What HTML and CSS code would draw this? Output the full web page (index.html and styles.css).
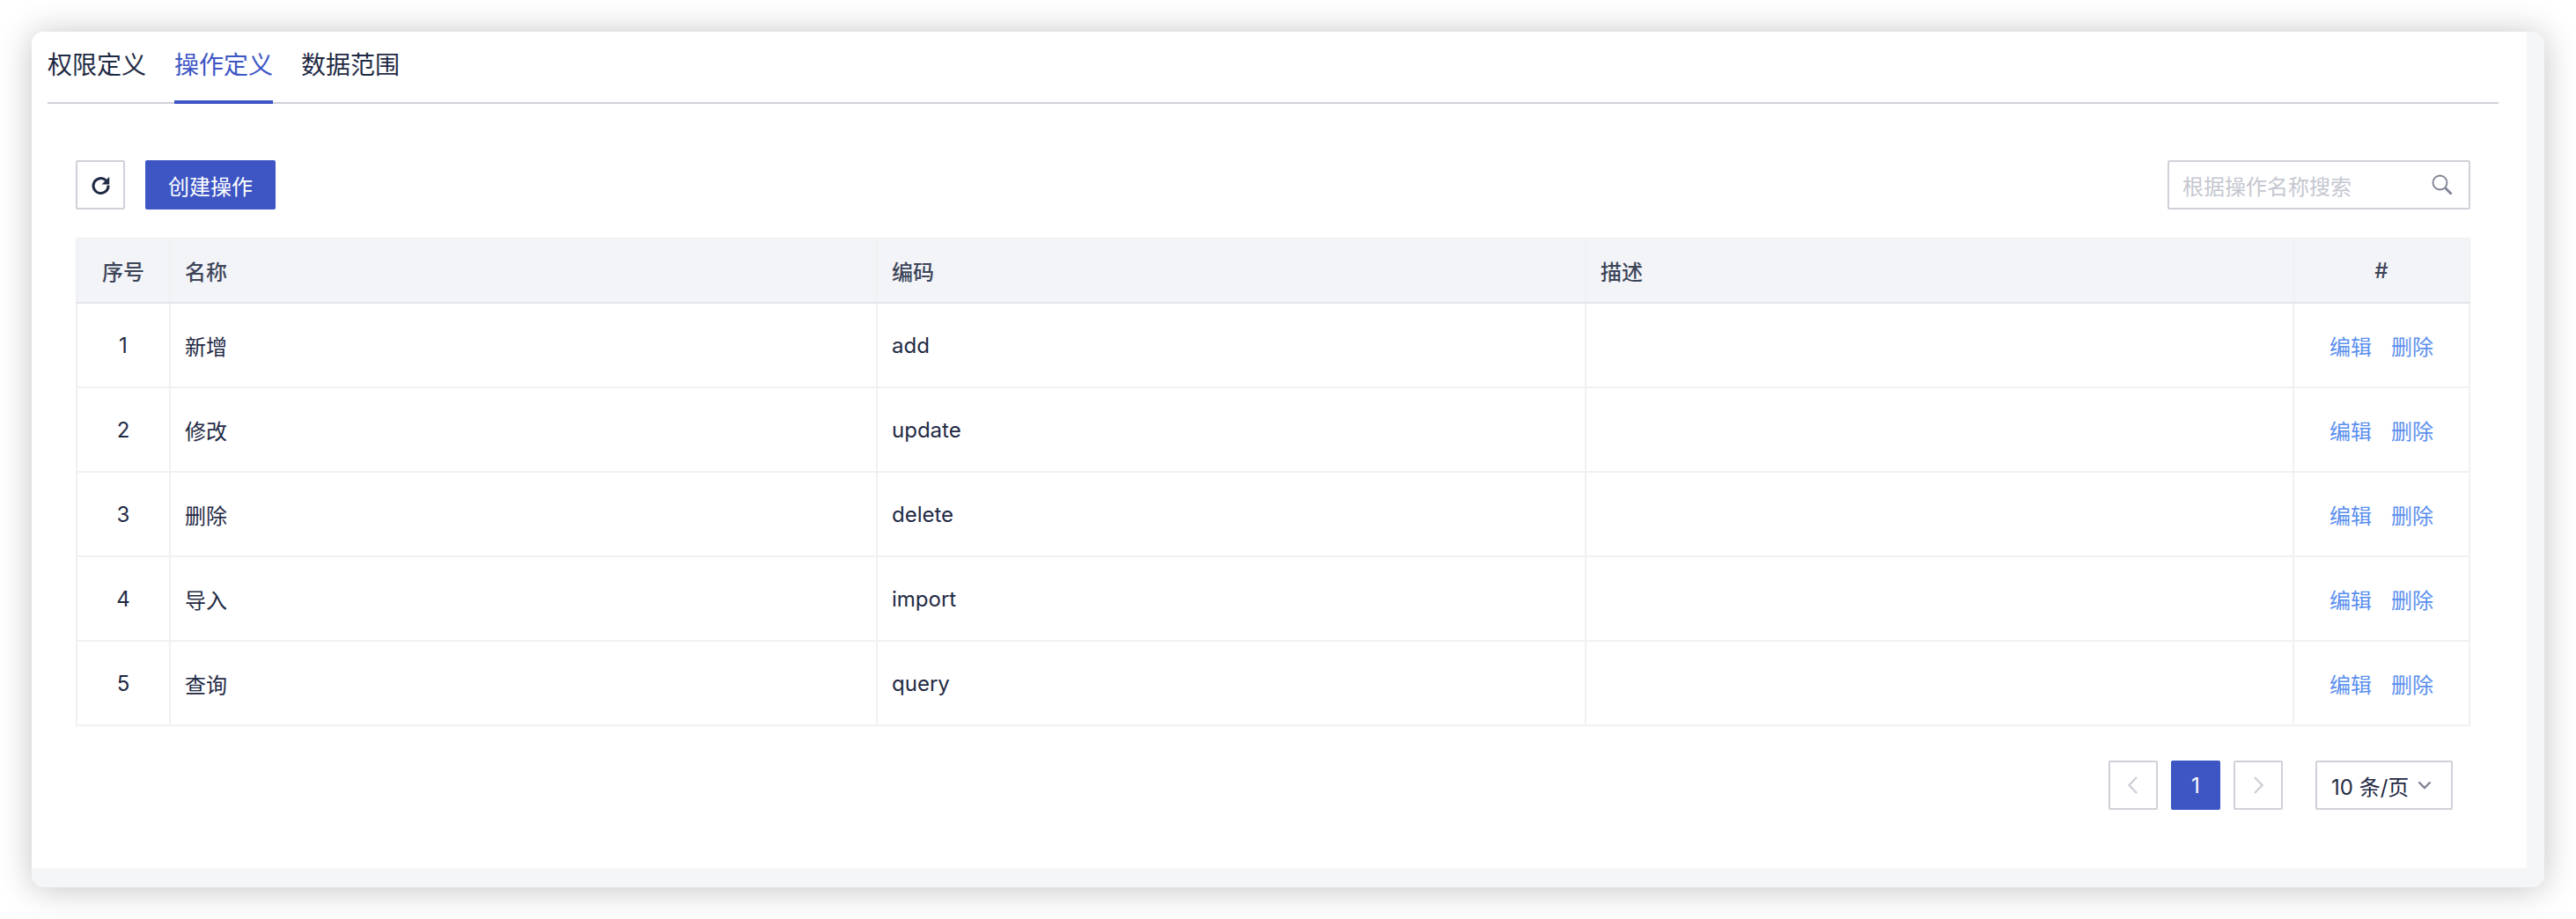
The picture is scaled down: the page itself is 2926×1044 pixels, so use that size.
FILE: index.html
```html
<!DOCTYPE html>
<html lang="zh-CN">
<head>
  <meta charset="UTF-8">
  <title>操作定义</title>
  <link rel="stylesheet" href="styles.css">
</head>
<body>

<div class="card">
  <div class="panel">
    <div class="tabs">
      <a class="tab">权限定义</a>
      <a class="tab active">操作定义</a>
      <a class="tab">数据范围</a>
    </div>

    <div class="content">
      <div class="toolbar">
        <div class="toolbar-left">
          <button class="btn-icon">
            <svg width="24" height="24" viewBox="0 0 24 24" fill="none">
              <path d="M18.300 6.800A8.500 8.500 0 1 0 21 12.500" stroke="#1f2a44" stroke-width="3"/>
              <path d="M22.200 2.700v8.800h-8.600z" fill="#1f2a44"/>
            </svg>
          </button>
          <button class="btn-primary">创建操作</button>
        </div>
        <div class="search">
          <span class="placeholder">根据操作名称搜索</span>
          <svg width="24" height="24" viewBox="0 0 24 24" fill="none" stroke="#7d8294">
            <circle cx="9.500" cy="9.500" r="8" stroke-width="1.800"/>
            <path d="M15.500 15.500l7 7" stroke-width="2.800"/>
          </svg>
        </div>
      </div>

      <table class="grid">
        <colgroup>
          <col class="col-no"><col class="col-name"><col class="col-code"><col class="col-desc"><col>
        </colgroup>
        <thead>
          <tr>
            <th class="center">序号</th>
            <th>名称</th>
            <th>编码</th>
            <th>描述</th>
            <th class="center">#</th>
          </tr>
        </thead>
        <tbody>
          <tr>
            <td class="center">1</td><td>新增</td><td>add</td><td></td>
            <td class="center"><a class="link">编辑</a><a class="link">删除</a></td>
          </tr>
          <tr>
            <td class="center">2</td><td>修改</td><td>update</td><td></td>
            <td class="center"><a class="link">编辑</a><a class="link">删除</a></td>
          </tr>
          <tr>
            <td class="center">3</td><td>删除</td><td>delete</td><td></td>
            <td class="center"><a class="link">编辑</a><a class="link">删除</a></td>
          </tr>
          <tr>
            <td class="center">4</td><td>导入</td><td>import</td><td></td>
            <td class="center"><a class="link">编辑</a><a class="link">删除</a></td>
          </tr>
          <tr>
            <td class="center">5</td><td>查询</td><td>query</td><td></td>
            <td class="center"><a class="link">编辑</a><a class="link">删除</a></td>
          </tr>
        </tbody>
      </table>

      <div class="pager">
        <span class="page">
          <svg width="16" height="24" viewBox="0 0 16 24" fill="none" stroke="#cfd0d6" stroke-width="2.400"><path d="M12 3L3.500 12l8.500 9"/></svg>
        </span>
        <span class="page current">1</span>
        <span class="page">
          <svg width="16" height="24" viewBox="0 0 16 24" fill="none" stroke="#cfd0d6" stroke-width="2.400"><path d="M4 3l8.500 9L4 21"/></svg>
        </span>
        <span class="page-size">
          <span>10 条/页</span>
          <svg class="caret" width="16" height="10" viewBox="0 0 16 10" fill="none" stroke="#7d8294" stroke-width="2.400"><path d="M1.500 1.500L8 8l6.500-6.500"/></svg>
        </span>
      </div>
    </div>
  </div>
</div>

</body>
</html>
```

FILE: styles.css
```css
* { box-sizing: border-box; }
body {
  margin: 0;
  padding: 36px;
  background: #fff;
  color: #1f2a44;
  font-family: Inter, "Noto Sans CJK SC", sans-serif;
  font-size: 24px;
}
.card {
  height: 972px;
  background: #f5f6f8;
  border-radius: 14px;
  box-shadow: 0 2px 38px rgba(0, 0, 0, 0.24);
  padding: 0 20px 22px 0;
}
.panel {
  height: 100%;
  background: #fff;
  border-radius: 14px 0 0 0;
  padding: 0 32px 0 18px;
}
.tabs {
  display: flex;
  gap: 32px;
  height: 82px;
  border-bottom: 2px solid #cfcfd7;
}
.tab {
  height: 82px;
  line-height: 76px;
  font-size: 28px;
  color: #1f2a44;
}
.tab.active {
  color: #3d56c4;
  border-bottom: 4px solid #3d56c4;
}
.content { padding: 64px 32px 0; }
.toolbar {
  display: flex;
  justify-content: space-between;
  height: 56px;
}
.toolbar-left { display: flex; gap: 23px; }
.btn-icon {
  display: flex;
  align-items: center;
  justify-content: center;
  width: 56px;
  height: 56px;
  padding: 0;
  background: #fff;
  border: 2px solid #d0d0d8;
  border-radius: 2px;
}
.btn-primary {
  width: 148px;
  height: 56px;
  padding: 0;
  background: #3d56c4;
  color: #fff;
  border: 0;
  border-radius: 2px;
  font: inherit;
}
.search {
  display: flex;
  align-items: center;
  justify-content: space-between;
  width: 344px;
  height: 56px;
  padding: 0 18px 0 15px;
  border: 2px solid #d0d0d8;
  border-radius: 2px;
}
.placeholder { color: #c5c7d0; }
.grid {
  width: 2720px;
  margin-top: 32px;
  table-layout: fixed;
  border-collapse: collapse;
}
.col-no { width: 106px; }
.col-name { width: 803px; }
.col-code { width: 805px; }
.col-desc { width: 804px; }
.grid th, .grid td {
  padding: 0 16px;
  text-align: left;
  border: 2px solid #f0f1f3;
}
.grid th {
  height: 73px;
  background: #f3f4f8;
  color: #3d4558;
  font-weight: 500;
  border-bottom-color: #e4e5ea;
}
.grid td { height: 96px; }
.grid .center { text-align: center; }
.link { color: #5b8fee; }
.link + .link { margin-left: 22px; }
.pager {
  display: flex;
  justify-content: flex-end;
  gap: 15px;
  margin-top: 39px;
  padding-right: 20px;
}
.page {
  display: flex;
  align-items: center;
  justify-content: center;
  width: 56px;
  height: 56px;
  border: 2px solid #d0d0d8;
  border-radius: 2px;
}
.page.current {
  background: #3d56c4;
  border-color: #3d56c4;
  color: #fff;
}
.page-size {
  display: flex;
  align-items: center;
  justify-content: space-between;
  width: 156px;
  height: 56px;
  margin-left: 22px;
  padding: 0 22px 0 16px;
  border: 2px solid #d0d0d8;
  border-radius: 2px;
  white-space: nowrap;
}
.caret { flex: none; }
```
